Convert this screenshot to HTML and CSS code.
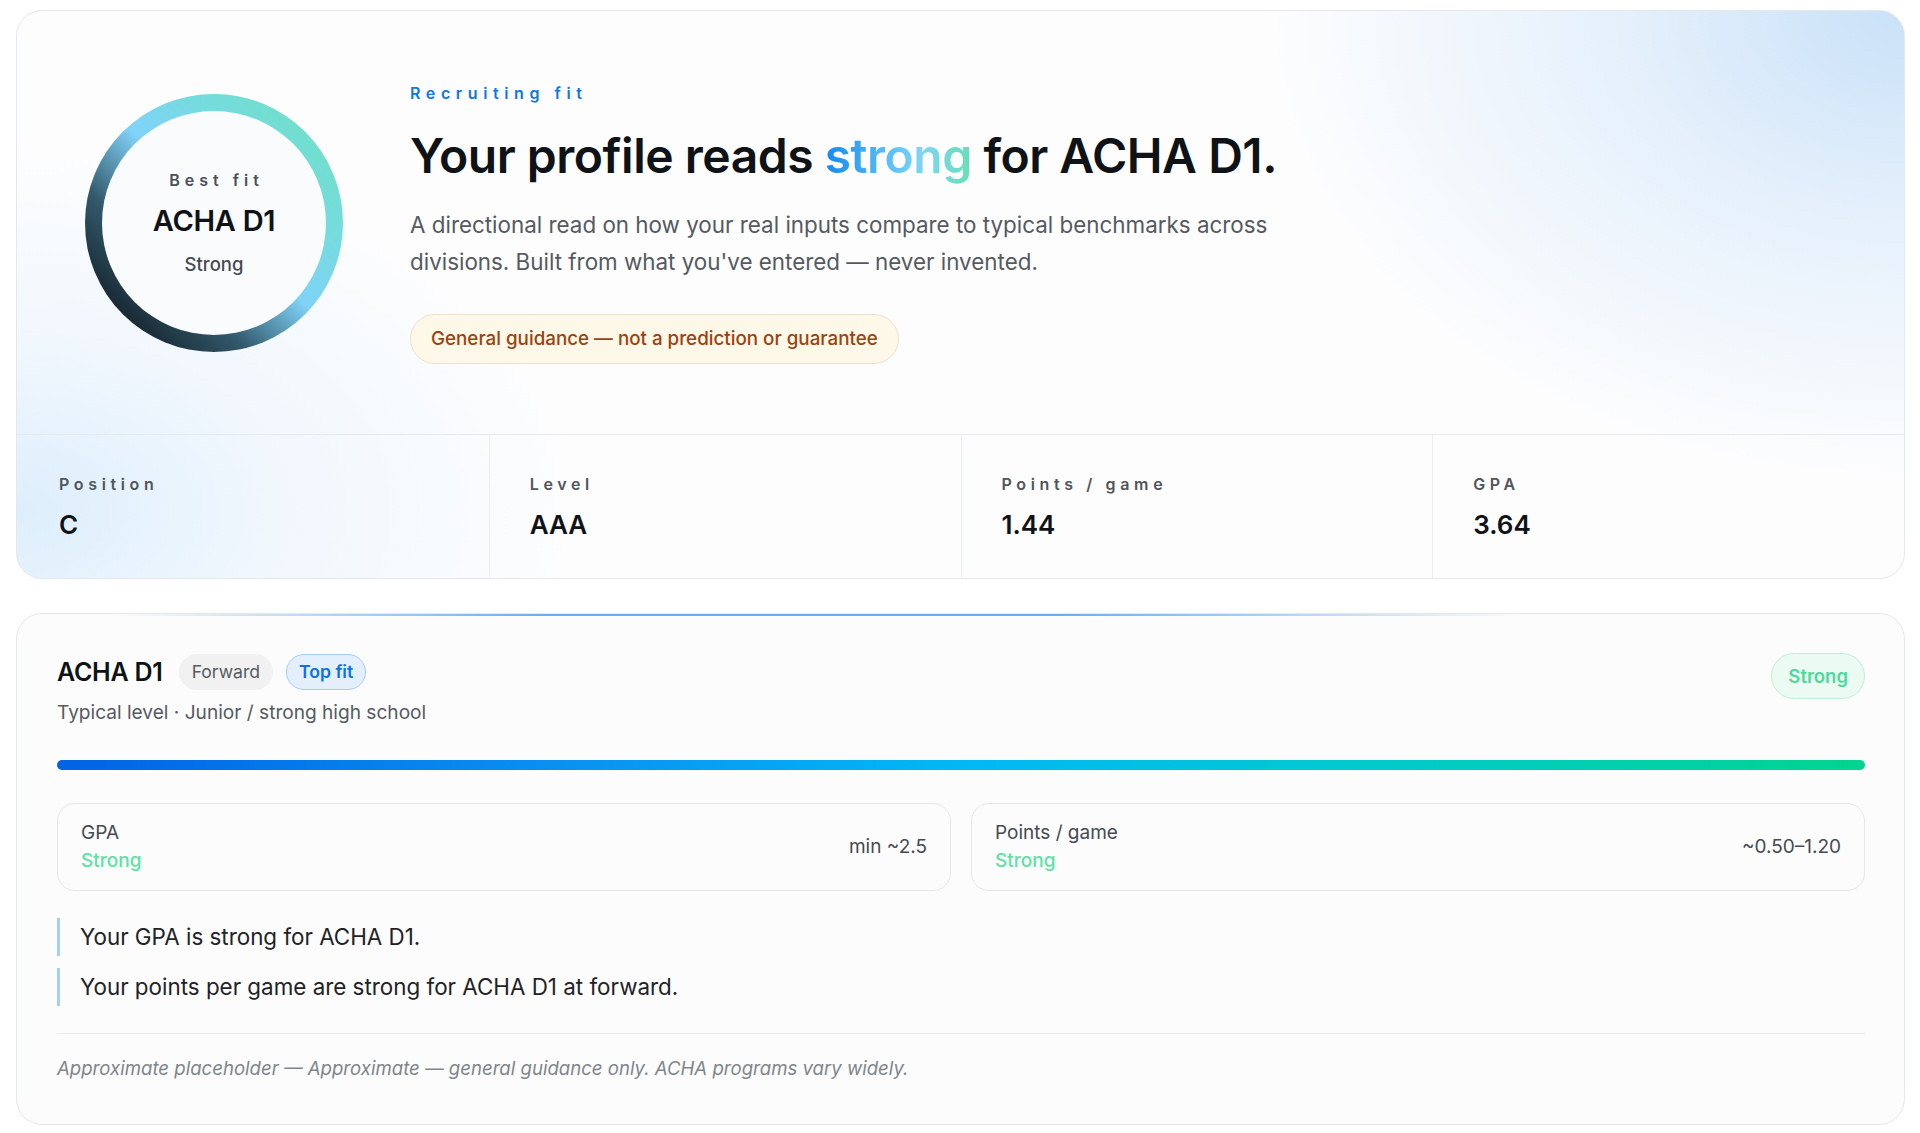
FILE: index.html
```html
<!DOCTYPE html>
<html lang="en">

<head>
  <meta charset="UTF-8">
  <title>Recruiting fit</title>
  <link rel="stylesheet" href="styles.css">
</head>

<body>
  <div class="page">

    <section class="fit-card">
      <div class="hero">
        <div class="ring">
          <div class="ring-inner">
            <div class="ring-label">Best fit</div>
            <div class="ring-level">ACHA D1</div>
            <div class="ring-tier">Strong</div>
          </div>
        </div>

        <div class="hero-text">
          <div class="eyebrow">Recruiting fit</div>
          <h1 class="headline">Your profile reads <span class="grad">strong</span> for ACHA D1.</h1>
          <p class="lede">A directional read on how your real inputs compare to typical benchmarks across divisions. Built from what you've entered — never invented.</p>
          <span class="notice">General guidance — not a prediction or guarantee</span>
        </div>
      </div>

      <div class="stats">
        <div class="stat">
          <div class="stat-label">Position</div>
          <div class="stat-value">C</div>
        </div>
        <div class="stat">
          <div class="stat-label">Level</div>
          <div class="stat-value">AAA</div>
        </div>
        <div class="stat">
          <div class="stat-label">Points / game</div>
          <div class="stat-value">1.44</div>
        </div>
        <div class="stat">
          <div class="stat-label">GPA</div>
          <div class="stat-value">3.64</div>
        </div>
      </div>
    </section>

    <section class="division-card">
      <div class="division-head">
        <div>
          <div class="division-title-row">
            <h2 class="division-title">ACHA D1</h2>
            <span class="chip chip-gray">Forward</span>
            <span class="chip chip-blue">Top fit</span>
          </div>
          <div class="division-sub">Typical level · Junior / strong high school</div>
        </div>
        <span class="tier-badge">Strong</span>
      </div>

      <div class="meter">
        <div class="meter-fill" style="width: 100%"></div>
      </div>

      <div class="metrics">
        <div class="metric">
          <div>
            <div class="metric-name">GPA</div>
            <div class="metric-tier">Strong</div>
          </div>
          <div class="metric-range">min ~2.5</div>
        </div>
        <div class="metric">
          <div>
            <div class="metric-name">Points / game</div>
            <div class="metric-tier">Strong</div>
          </div>
          <div class="metric-range">~0.50–1.20</div>
        </div>
      </div>

      <div class="notes">
        <div class="note">Your GPA is strong for ACHA D1.</div>
        <div class="note">Your points per game are strong for ACHA D1 at forward.</div>
      </div>

      <div class="footnote">Approximate placeholder — Approximate — general guidance only. ACHA programs vary widely.</div>
    </section>

  </div>
</body>

</html>
```

FILE: styles.css
```css
html,
body {
  margin: 0;
  background: #fff;
}

body {
  font-family: Inter, "Noto Sans", "Liberation Sans", sans-serif;
  color: #14171c;
}

.page {
  padding: 10px 15px 10px 16px;
  display: flex;
  flex-direction: column;
  gap: 34px;
}

/* top card */

.fit-card {
  border: 1px solid #e5e7ea;
  border-radius: 26px;
  overflow: hidden;
  background:
    radial-gradient(ellipse 640px 470px at 100% 0%, #c9e1f8 0%, rgba(214, 232, 250, 0.6) 45%, rgba(255, 255, 255, 0) 100%),
    radial-gradient(ellipse 560px 360px at 0% 88%, #ddeefc 0%, rgba(232, 243, 253, 0.6) 45%, rgba(255, 255, 255, 0) 100%),
    #fdfdfe;
}

.hero {
  display: flex;
  align-items: center;
  gap: 67px;
  padding: 70px 64px 70px 68px;
}

.ring {
  width: 258px;
  height: 258px;
  flex-shrink: 0;
  box-sizing: border-box;
  padding: 17px;
  border-radius: 50%;
  background: linear-gradient(45deg, #15232c 12%, #335a6d 32%, #80d3f8 52%, #76dbe0 70%, #6fe0c6 92%);
}

.ring-inner {
  width: 100%;
  height: 100%;
  border-radius: 50%;
  background: #f9fbfd;
  display: flex;
  flex-direction: column;
  align-items: center;
  justify-content: center;
}

.ring-label {
  font-size: 16px;
  line-height: 20px;
  font-weight: 600;
  letter-spacing: 5px;
  margin-right: -5px;
  color: #4b5058;
}

.ring-level {
  font-size: 29px;
  line-height: 36px;
  font-weight: 600;
  letter-spacing: -0.01em;
  margin-top: 13px;
  color: #0f1216;
}

.ring-tier {
  font-size: 18.5px;
  line-height: 24px;
  font-weight: 500;
  margin-top: 13px;
  color: #454a52;
}

.hero-text {
  max-width: 900px;
}

.eyebrow {
  font-size: 16px;
  line-height: 20px;
  font-weight: 600;
  letter-spacing: 5.6px;
  margin-top: 2px;
  color: #0b78e3;
}

.headline {
  margin: 24px 0 0;
  font-size: 48px;
  line-height: 58px;
  font-weight: 600;
  letter-spacing: -0.01em;
  color: #0f1216;
}

.grad {
  background: linear-gradient(90deg, #158af0 0%, #5cc1f6 45%, #7fd4f5 65%, #66e0b6 100%);
  -webkit-background-clip: text;
  background-clip: text;
  color: transparent;
}

.lede {
  margin: 21px 0 0;
  font-size: 22.4px;
  line-height: 37px;
  color: #555a62;
}

.notice {
  display: inline-block;
  margin-top: 34px;
  padding: 12px 20px;
  font-size: 18.8px;
  line-height: 24px;
  font-weight: 500;
  color: #9a430f;
  background: #fdf8e8;
  border: 1px solid #ebe2c9;
  border-radius: 999px;
}

.stats {
  display: grid;
  grid-template-columns: repeat(4, 1fr);
  border-top: 1px solid #e6e9ee;
}

.stat {
  padding: 39px 40px 37px;
  border-left: 1px solid #eceef1;
}

.stat:first-child {
  border-left: none;
  padding-left: 42px;
}

.stat-label {
  font-size: 16px;
  line-height: 20px;
  font-weight: 600;
  letter-spacing: 0.29em;
  color: #50555c;
}

.stat-value {
  margin-top: 15px;
  font-size: 26px;
  line-height: 32px;
  font-weight: 600;
  color: #0f1216;
}

/* division card */

.division-card {
  border: 1px solid #e7e8ea;
  border-radius: 26px;
  padding: 40px 39px 44px 40px;
  background:
    linear-gradient(90deg, rgba(90, 168, 240, 0) 5%, #6aaef0 28%, #6aaef0 55%, rgba(90, 168, 240, 0) 80%) top / 100% 2px no-repeat,
    #fcfcfc;
}

.division-head {
  display: flex;
  justify-content: space-between;
  align-items: flex-start;
}

.division-title-row {
  display: flex;
  align-items: center;
  gap: 13px;
}

.division-title {
  margin: 0 3px 0 0;
  font-size: 25px;
  line-height: 34px;
  font-weight: 600;
  letter-spacing: -0.01em;
  color: #0f1216;
}

.chip {
  display: inline-block;
  padding: 5px 12px;
  font-size: 17.6px;
  line-height: 24px;
  border-radius: 999px;
  border: 1px solid transparent;
}

.chip-gray {
  background: #f1f1f2;
  color: #565b62;
}

.chip-blue {
  background: #e3effd;
  border-color: #a3cdf5;
  color: #0b72e0;
  font-weight: 600;
}

.division-sub {
  margin-top: 9px;
  font-size: 19.1px;
  line-height: 26px;
  color: #555a62;
}

.tier-badge {
  margin-top: -1px;
  padding: 10px 16px;
  font-size: 18.5px;
  line-height: 24px;
  font-weight: 600;
  color: #4ed99b;
  background: #ebfaf3;
  border: 1px solid #bfeed9;
  border-radius: 999px;
}

.meter {
  margin-top: 35px;
  height: 10px;
  border-radius: 6px;
  background: #eef1f4;
}

.meter-fill {
  height: 100%;
  border-radius: 6px;
  background: linear-gradient(90deg, #0063e5 0%, #0a94f2 30%, #00b8f6 50%, #00c8d2 70%, #00d48e 100%);
}

.metrics {
  margin-top: 33px;
  display: grid;
  grid-template-columns: 1fr 1fr;
  gap: 20px;
}

.metric {
  display: flex;
  justify-content: space-between;
  align-items: center;
  padding: 15px 23px;
  border: 1px solid #e5e6e8;
  border-radius: 18px;
  background: #fcfcfc;
}

.metric-name {
  font-size: 19px;
  line-height: 28px;
  color: #454a52;
}

.metric-tier {
  font-size: 19px;
  line-height: 28px;
  font-weight: 500;
  color: #5be2a4;
}

.metric-range {
  font-size: 19px;
  line-height: 28px;
  color: #454a52;
}

.notes {
  margin-top: 27px;
  display: flex;
  flex-direction: column;
  gap: 12px;
}

.note {
  padding-left: 20px;
  border-left: 3px solid #a6cff5;
  font-size: 22.4px;
  line-height: 38px;
  color: #1f2328;
}

.footnote {
  margin-top: 27px;
  padding-top: 22px;
  border-top: 1px solid #ececee;
  font-size: 18.6px;
  line-height: 24px;
  font-style: italic;
  color: #80858c;
}
```
